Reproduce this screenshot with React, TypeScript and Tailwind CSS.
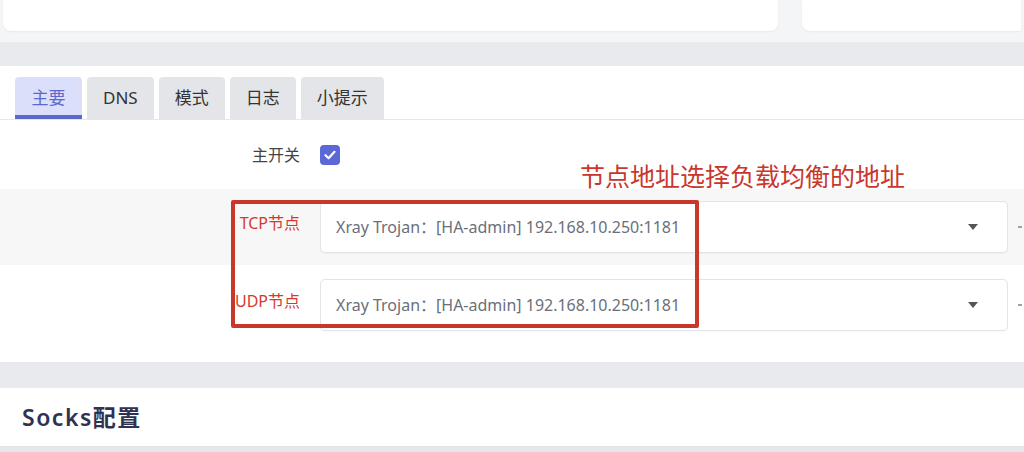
import React from "react";

const FONT = { fontFamily: '"Noto Sans", "Noto Sans CJK SC", sans-serif' };

const TABS = ["主要", "DNS", "模式", "日志", "小提示"];

function Caret() {
  return (
    <svg width="10" height="6" viewBox="0 0 10 6" className="text-[#555]">
      <path d="M0 0h10L5 6z" fill="currentColor" />
    </svg>
  );
}

function NodeSelect({ value }: { value: string }) {
  return (
    <div className="flex items-center">
      <div className="flex h-[52px] w-[688px] items-center justify-between rounded-[5px] border border-[#e3e4e8] bg-white pl-[15px] pr-[29px] shadow-[0_1px_1px_rgba(0,0,0,0.03)]">
        <span className="text-[16px] text-[#6b6f7a]">{value}</span>
        <Caret />
      </div>
      <span className="ml-[10px] h-[2px] w-[4px] bg-[#9ca3af]" />
    </div>
  );
}

export default function App() {
  const node = "Xray Trojan：[HA-admin] 192.168.10.250:1181";
  return (
    <div style={FONT} className="relative h-[452px] w-[1024px] overflow-hidden bg-[#e6e7eb]">
      {/* top cards */}
      <div className="flex h-[42px] gap-[24px] bg-[#f4f5f7] px-[3px]">
        <div className="h-[31px] w-[775px] rounded-b-[8px] bg-white shadow-[0_1px_2px_rgba(0,0,0,0.05)]" />
        <div className="h-[31px] flex-1 rounded-bl-[8px] bg-white shadow-[0_1px_2px_rgba(0,0,0,0.05)]" />
      </div>
      <div className="h-[24px] bg-[#e9eaee]" />

      {/* main panel */}
      <div className="bg-white pt-[11px]">
        <div className="flex gap-[5px] border-b border-[#e5e7eb] px-[15px]">
          {TABS.map((t, i) => (
            <div
              key={t}
              className={
                i === 0
                  ? "flex h-[42px] w-[67px] items-center justify-center rounded-t-[4px] border-b-[4px] border-[#5b68cf] bg-[#dcdff9] pt-[4px] text-[17px] text-[#5b68cf]"
                  : "flex h-[42px] items-center justify-center rounded-t-[4px] bg-[#e3e5e9] px-[16px] text-[17px] text-[#333]"
              }
            >
              {t}
            </div>
          ))}
        </div>

        <div className="flex h-[69px] items-center">
          <div className="w-[300px] text-right text-[16px] text-[#444]">主开关</div>
          <div className="ml-[20px] flex h-[20px] w-[20px] items-center justify-center rounded-[4px] bg-[#5b68d6]">
            <svg width="12" height="10" viewBox="0 0 12 10">
              <path d="M1.5 5.2 4.6 8.2 10.5 1.8" fill="none" stroke="white" strokeWidth="2.2" strokeLinecap="round" strokeLinejoin="round" />
            </svg>
          </div>
        </div>

        <div className="flex h-[76px] items-center bg-[#f7f7f7]">
          <div className="w-[300px] pb-[8px] text-right text-[16px] text-[#d43a2c]">TCP节点</div>
          <div className="ml-[20px]">
            <NodeSelect value={node} />
          </div>
        </div>

        <div className="flex h-[97px] items-start pt-[14px]">
          <div className="flex h-[52px] w-[300px] items-center justify-end pb-[8px] text-[16px] text-[#d43a2c]">UDP节点</div>
          <div className="ml-[20px]">
            <NodeSelect value={node} />
          </div>
        </div>
      </div>

      <div className="h-[26px] bg-[#e9eaee]" />
      <div className="flex h-[59px] items-center border-b border-[#e2e3e7] bg-white px-[22px]">
        <h2 className="text-[23px] font-semibold tracking-[1.5px] text-[#2f3250]">Socks配置</h2>
      </div>

      {/* annotation overlay */}
      <div className="pointer-events-none absolute left-[231px] top-[200px] h-[128px] w-[468px] rounded-[2px] border-[4px] border-[#c9372c]" />
      <div className="pointer-events-none absolute left-[580px] top-[160px] text-[25px] leading-[32px] text-[#c9372c]">
        节点地址选择负载均衡的地址
      </div>
    </div>
  );
}
